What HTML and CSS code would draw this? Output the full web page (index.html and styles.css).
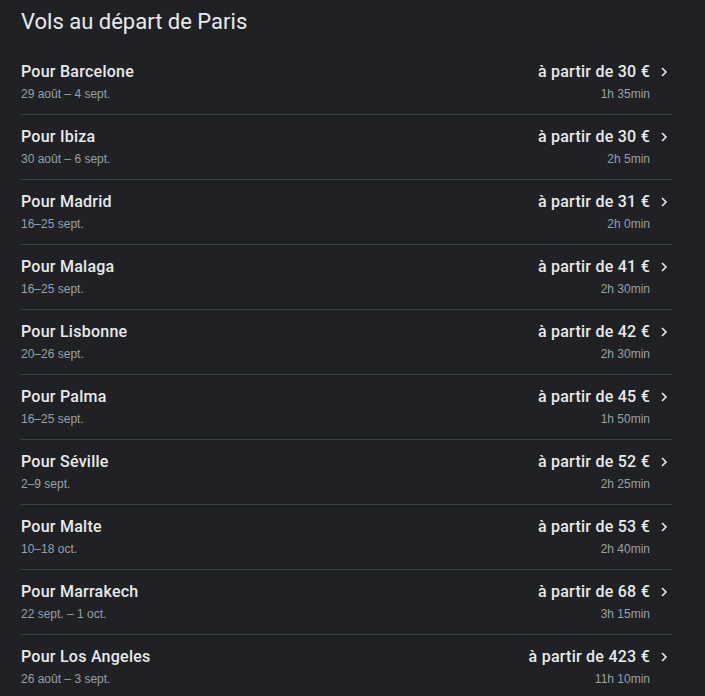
FILE: index.html
```html
<!DOCTYPE html>
<html lang="fr">
<head>
<meta charset="utf-8">
<link rel="stylesheet" href="styles.css">
</head>
<body>
<div class="page">
  <h1 class="title">Vols au départ de Paris</h1>
  <ul class="list">
    <li class="row"><div class="left"><div class="name">Pour Barcelone</div><div class="sub">29 août – 4 sept.</div></div><div class="right"><div class="price">à partir de 30 €</div><div class="sub">1h 35min</div></div><svg class="chev" viewBox="0 0 8 12"><path d="M2 2l4 4-4 4"/></svg></li>
    <li class="row"><div class="left"><div class="name">Pour Ibiza</div><div class="sub">30 août – 6 sept.</div></div><div class="right"><div class="price">à partir de 30 €</div><div class="sub">2h 5min</div></div><svg class="chev" viewBox="0 0 8 12"><path d="M2 2l4 4-4 4"/></svg></li>
    <li class="row"><div class="left"><div class="name">Pour Madrid</div><div class="sub">16–25 sept.</div></div><div class="right"><div class="price">à partir de 31 €</div><div class="sub">2h 0min</div></div><svg class="chev" viewBox="0 0 8 12"><path d="M2 2l4 4-4 4"/></svg></li>
    <li class="row"><div class="left"><div class="name">Pour Malaga</div><div class="sub">16–25 sept.</div></div><div class="right"><div class="price">à partir de 41 €</div><div class="sub">2h 30min</div></div><svg class="chev" viewBox="0 0 8 12"><path d="M2 2l4 4-4 4"/></svg></li>
    <li class="row"><div class="left"><div class="name">Pour Lisbonne</div><div class="sub">20–26 sept.</div></div><div class="right"><div class="price">à partir de 42 €</div><div class="sub">2h 30min</div></div><svg class="chev" viewBox="0 0 8 12"><path d="M2 2l4 4-4 4"/></svg></li>
    <li class="row"><div class="left"><div class="name">Pour Palma</div><div class="sub">16–25 sept.</div></div><div class="right"><div class="price">à partir de 45 €</div><div class="sub">1h 50min</div></div><svg class="chev" viewBox="0 0 8 12"><path d="M2 2l4 4-4 4"/></svg></li>
    <li class="row"><div class="left"><div class="name">Pour Séville</div><div class="sub">2–9 sept.</div></div><div class="right"><div class="price">à partir de 52 €</div><div class="sub">2h 25min</div></div><svg class="chev" viewBox="0 0 8 12"><path d="M2 2l4 4-4 4"/></svg></li>
    <li class="row"><div class="left"><div class="name">Pour Malte</div><div class="sub">10–18 oct.</div></div><div class="right"><div class="price">à partir de 53 €</div><div class="sub">2h 40min</div></div><svg class="chev" viewBox="0 0 8 12"><path d="M2 2l4 4-4 4"/></svg></li>
    <li class="row"><div class="left"><div class="name">Pour Marrakech</div><div class="sub">22 sept. – 1 oct.</div></div><div class="right"><div class="price">à partir de 68 €</div><div class="sub">3h 15min</div></div><svg class="chev" viewBox="0 0 8 12"><path d="M2 2l4 4-4 4"/></svg></li>
    <li class="row"><div class="left"><div class="name">Pour Los Angeles</div><div class="sub">26 août – 3 sept.</div></div><div class="right"><div class="price">à partir de 423 €</div><div class="sub">11h 10min</div></div><svg class="chev" viewBox="0 0 8 12"><path d="M2 2l4 4-4 4"/></svg></li>
  </ul>
</div>
</body>
</html>
```
FILE: styles.css
```css
html, body {
  margin: 0;
  background: #202124;
}
.page {
  padding: 8px 33px 0 20px;
  font-family: Roboto, "Open Sans", "Liberation Sans", sans-serif;
  color: #e8eaed;
}
.title {
  margin: 0 0 14px 1px;
  font-size: 22px;
  line-height: 28px;
  font-weight: 400;
  color: #e8eaed;
}
.list {
  list-style: none;
  margin: 0;
  padding: 0;
}
.row {
  display: flex;
  align-items: flex-start;
  padding: 12px 0 12px 1px;
  border-bottom: 1px solid #3c4043;
}
.left {
  flex: 1;
}
.right {
  text-align: right;
}
.name, .price {
  font-size: 16px;
  line-height: 20px;
  font-weight: 500;
  letter-spacing: 0.25px;
  color: #e8eaed;
}
.sub {
  margin-top: 4px;
  font-family: "Liberation Sans", Arial, sans-serif;
  font-size: 12px;
  line-height: 16px;
  color: #9aa0a6;
}
.chev {
  width: 8px;
  height: 12px;
  margin: 4px 4px 0 10px;
  fill: none;
  stroke: #e8eaed;
  stroke-width: 1.6;
}
```
